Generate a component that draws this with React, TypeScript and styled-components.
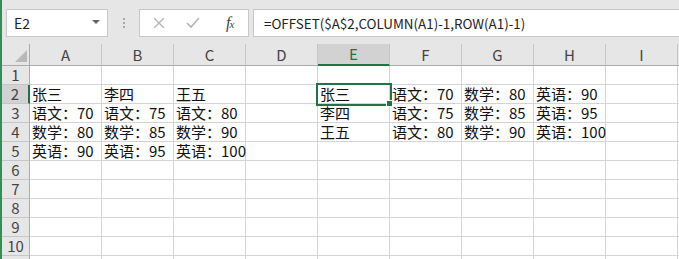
import styled, { createGlobalStyle, css } from "styled-components"

const GlobalStyle = createGlobalStyle`
    html, body {
        margin: 0;
        padding: 0;
        background: #fff;
        overflow: hidden;
    }
`

const green = "#217346"
const cellFont = `"Noto Sans CJK SC", "Liberation Sans", sans-serif`

const Window = styled.div`
    width: 679px;
    height: 259px;
    overflow: hidden;
    border-left: 2px solid #3c8a5a;
    box-sizing: border-box;
    display: flex;
    flex-direction: column;
    font-family: ${cellFont};
`

const FormulaBar = styled.div`
    height: 44px;
    flex: none;
    background: #e6e6e6;
    display: flex;
    align-items: flex-start;
    padding: 9px 0 0 4px;
    box-sizing: border-box;
`

const NameBox = styled.div`
    width: 102px;
    height: 28px;
    box-sizing: border-box;
    background: #fff;
    border: 1px solid #c8c8c8;
    display: flex;
    align-items: center;
    justify-content: space-between;
    padding: 0 7px 0 7px;
    font-size: 14px;
    color: #222;
`

const Caret = styled.span`
    width: 0;
    height: 0;
    border-left: 4px solid transparent;
    border-right: 4px solid transparent;
    border-top: 4px solid #666;
    margin-top: -3px;
`

const Grip = styled.div`
    width: 31px;
    height: 28px;
    display: flex;
    flex-direction: column;
    align-items: center;
    justify-content: center;
    gap: 2px;
`

const Dot = styled.span`
    width: 2px;
    height: 2px;
    background: #a8a8a8;
`

const FxBox = styled.div`
    width: 110px;
    height: 28px;
    box-sizing: border-box;
    background: #fff;
    border: 1px solid #c8c8c8;
    display: flex;
    align-items: center;
    padding-left: 13px;
    gap: 21px;
`

const FxText = styled.span`
    font-family: "Liberation Serif", serif;
    font-style: italic;
    font-size: 16px;
    color: #444;
    margin-left: 5px;
    letter-spacing: -1px;
    sub {
        font-size: 11px;
        vertical-align: 0;
    }
`

const Formula = styled.div`
    flex: 1;
    height: 28px;
    margin-left: 4px;
    box-sizing: border-box;
    background: #fff;
    border: 1px solid #c8c8c8;
    border-right: none;
    display: flex;
    align-items: center;
    padding-left: 10px;
    font-size: 13.4px;
    color: #222;
    white-space: nowrap;
`

const Grid = styled.div`
    display: grid;
    grid-template-columns: 28px repeat(10, 72px);
    grid-template-rows: 22px repeat(11, 19px);
`

const HeaderCell = styled.div<{ $active?: boolean }>`
    box-sizing: border-box;
    background: ${p => (p.$active ? "#d2d2d2" : "#e6e6e6")};
    border-right: 1px solid #c6c6c6;
    border-bottom: ${p => (p.$active ? `2px solid ${green}` : "1px solid #ababab")};
    color: ${p => (p.$active ? green : "#444")};
    font-size: 15px;
    display: flex;
    align-items: flex-end;
    justify-content: center;
    line-height: 20px;
`

const Corner = styled.div`
    box-sizing: border-box;
    background: #e6e6e6;
    border-right: 1px solid #ababab;
    border-bottom: 1px solid #ababab;
    display: flex;
    align-items: flex-end;
    justify-content: flex-end;
    padding: 0 2px 3px 0;
`

const Triangle = styled.span`
    width: 0;
    height: 0;
    border-left: 12px solid transparent;
    border-bottom: 12px solid #b9b9b9;
`

const RowHead = styled.div<{ $active?: boolean }>`
    box-sizing: border-box;
    background: ${p => (p.$active ? "#d2d2d2" : "#e6e6e6")};
    border-right: ${p => (p.$active ? `2px solid ${green}` : "1px solid #ababab")};
    border-bottom: 1px solid #c6c6c6;
    color: #444;
    font-size: 15px;
    display: flex;
    align-items: flex-end;
    justify-content: center;
    line-height: 18px;
`

const Cell = styled.div<{ $active?: boolean }>`
    position: relative;
    box-sizing: border-box;
    border-right: 1px solid #d4d4d4;
    border-bottom: 1px solid #d4d4d4;
    font-size: 15px;
    color: #111;
    white-space: nowrap;
    overflow: visible;
    display: flex;
    align-items: flex-end;
    padding-left: 2px;
    line-height: 18px;
    ${p =>
        p.$active &&
        css`
            z-index: 2;
            outline: 2px solid ${green};
            outline-offset: 0px;
            &::after {
                content: "";
                position: absolute;
                right: -4px;
                bottom: -4px;
                width: 5px;
                height: 5px;
                background: ${green};
                border: 1px solid #fff;
            }
        `}
`

const CellText = styled.span`
    position: relative;
    z-index: 1;
`

// J is only a sliver at the right edge, its letter is off screen
const cols = ["A", "B", "C", "D", "E", "F", "G", "H", "I", "J"]

const data: Record<string, string> = {
    A2: "张三", B2: "李四", C2: "王五",
    A3: "语文：70", B3: "语文：75", C3: "语文：80",
    A4: "数学：80", B4: "数学：85", C4: "数学：90",
    A5: "英语：90", B5: "英语：95", C5: "英语：100",
    E2: "张三", F2: "语文：70", G2: "数学：80", H2: "英语：90",
    E3: "李四", F3: "语文：75", G3: "数学：85", H3: "英语：95",
    E4: "王五", F4: "语文：80", G4: "数学：90", H4: "英语：100",
}

function CrossIcon() {
    return (
        <svg width="12" height="12" viewBox="0 0 12 12">
            <path d="M1 1 L11 11 M11 1 L1 11" stroke="#b4b4b4" strokeWidth="1.4" fill="none" />
        </svg>
    )
}

function CheckIcon() {
    return (
        <svg width="14" height="12" viewBox="0 0 14 12">
            <path d="M1 6 L5 10 L13 1" stroke="#b4b4b4" strokeWidth="1.6" fill="none" />
        </svg>
    )
}

export default function App() {
    const rows = Array.from({ length: 11 }, (_, i) => i + 1)
    return (
        <Window>
            <GlobalStyle />
            <FormulaBar>
                <NameBox>
                    E2
                    <Caret />
                </NameBox>
                <Grip>
                    <Dot />
                    <Dot />
                    <Dot />
                </Grip>
                <FxBox>
                    <CrossIcon />
                    <CheckIcon />
                    <FxText>
                        f<sub>x</sub>
                    </FxText>
                </FxBox>
                <Formula>=OFFSET($A$2,COLUMN(A1)-1,ROW(A1)-1)</Formula>
            </FormulaBar>
            <Grid>
                <Corner>
                    <Triangle />
                </Corner>
                {cols.map(c => (
                    <HeaderCell key={c} $active={c === "E"}>
                        {c === "J" ? "" : c}
                    </HeaderCell>
                ))}
                {rows.map(r => [
                    <RowHead key={`r${r}`} $active={r === 2}>
                        {r < 11 ? r : ""}
                    </RowHead>,
                    ...cols.map(c => {
                        const id = `${c}${r}`
                        return (
                            <Cell key={id} $active={id === "E2"}>
                                {data[id] && <CellText>{data[id]}</CellText>}
                            </Cell>
                        )
                    }),
                ])}
            </Grid>
        </Window>
    )
}
